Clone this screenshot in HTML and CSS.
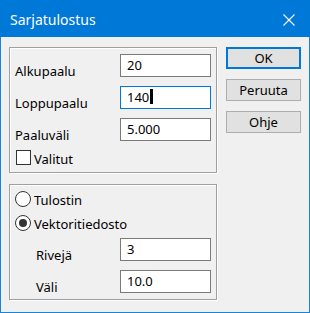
FILE: index.html
```
<!DOCTYPE html>
<html lang="fi">
<head>
  <meta charset="UTF-8">
  <title>Sarjatulostus</title>
  <link rel="stylesheet" href="styles.css">
</head>
<body>
  <div class="window">
    <div class="titlebar">
      <span class="title">Sarjatulostus</span>
      <svg class="close" viewBox="0 0 12 12" width="12" height="12">
        <path d="M0.5 0.5L11.5 11.5M11.5 0.5L0.5 11.5" stroke="#fff" stroke-width="1.1" fill="none"/>
      </svg>
    </div>

    <div class="content">
      <div class="main">
        <!-- Paalut -->
        <div class="group group-top">
          <div class="row">
            <span class="label">Alkupaalu</span>
            <div class="field">20</div>
          </div>
          <div class="row">
            <span class="label">Loppupaalu</span>
            <div class="field focused">140<span class="caret"></span></div>
          </div>
          <div class="row">
            <span class="label">Paaluväli</span>
            <div class="field">5.000</div>
          </div>
          <div class="check-row">
            <span class="checkbox"></span>
            <span class="check-text">Valitut</span>
          </div>
        </div>

        <!-- Tulostustapa -->
        <div class="group group-bottom">
          <div class="radio-row">
            <span class="radio"></span>
            <span class="check-text">Tulostin</span>
          </div>
          <div class="radio-row second">
            <span class="radio checked"></span>
            <span class="check-text">Vektoritiedosto</span>
          </div>
          <div class="row sub">
            <span class="label">Rivejä</span>
            <div class="field">3</div>
          </div>
          <div class="row">
            <span class="label">Väli</span>
            <div class="field">10.0</div>
          </div>
        </div>
      </div>

      <div class="buttons">
        <div class="btn default">OK</div>
        <div class="btn">Peruuta</div>
        <div class="btn">Ohje</div>
      </div>
    </div>
  </div>
</body>
</html>
```

FILE: styles.css
```
body {
  margin: 0;
  font-family: "Noto Sans", "DejaVu Sans", sans-serif;
  font-size: 13px;
  color: #000;
  background-color: #f0f0f0;
}

.window {
  width: 310px;
  height: 313px;
  box-sizing: border-box;
  border: 1px solid #1883d7;
  background-color: #f0f0f0;
}

.titlebar {
  display: flex;
  justify-content: space-between;
  align-items: center;
  height: 36px;
  margin: -1px -1px 0 -1px;
  padding: 1px 15px 0 10px;
  background-color: #0078d7;
  color: #fff;
}

.title {
  font-size: 14px;
  line-height: 18px;
  margin-top: 1px;
}

.close {
  display: block;
  margin-top: 1px;
}

.content {
  display: flex;
  padding: 10px 7px 0 8px;
  gap: 9px;
}

.main {
  display: flex;
  flex-direction: column;
  width: 208px;
  gap: 11px;
}

/* Group boxes */
.group {
  display: flex;
  flex-direction: column;
  border: 1px solid #a0a0a0;
  box-shadow: inset 1px 1px 0 #fff, 1px 1px 0 #fff;
  padding: 6px 5px 6px 5px;
}

.group-top {
  gap: 9px;
  padding-bottom: 7px;
}

.row {
  display: flex;
  justify-content: space-between;
  height: 23px;
}

.label {
  line-height: 16px;
  padding-top: 9px;
}

.row.sub {
  margin-top: 7px;
  margin-bottom: 9px;
}

.group-bottom .label {
  padding-left: 21px;
}

.field {
  width: 91px;
  height: 23px;
  box-sizing: border-box;
  border: 1px solid #7a7a7a;
  background-color: #fff;
  padding: 2px 5px 0 6px;
  line-height: 16px;
  display: flex;
  align-items: flex-start;
}

.field.focused {
  border-color: #0078d7;
}

.caret {
  display: inline-block;
  width: 3px;
  height: 15px;
  margin-left: 1px;
  background-color: #000;
}

/* Checkbox and radio */
.check-row,
.radio-row {
  display: flex;
  align-items: center;
  gap: 3px;
  line-height: 16px;
}

.check-row {
  height: 15px;
  padding-left: 1px;
}

.checkbox {
  width: 15px;
  height: 15px;
  box-sizing: border-box;
  border: 1px solid #333;
  background-color: #fff;
}

.radio-row {
  height: 16px;
}

.radio-row.second {
  margin-top: 8px;
}

.radio {
  width: 16px;
  height: 16px;
  box-sizing: border-box;
  border: 1px solid #333;
  border-radius: 50%;
  background-color: #fff;
  display: flex;
  align-items: center;
  justify-content: center;
}

.radio.checked::after {
  content: "";
  width: 8px;
  height: 8px;
  border-radius: 50%;
  background-color: #333;
}

.check-text {
  margin-top: 2px;
}

/* Buttons */
.buttons {
  display: flex;
  flex-direction: column;
  gap: 10px;
}

.btn {
  width: 75px;
  height: 22px;
  box-sizing: border-box;
  border: 1px solid #adadad;
  background-color: #e1e1e1;
  text-align: center;
  line-height: 20px;
}

.btn.default {
  border: 2px solid #0078d7;
  line-height: 18px;
}
```
